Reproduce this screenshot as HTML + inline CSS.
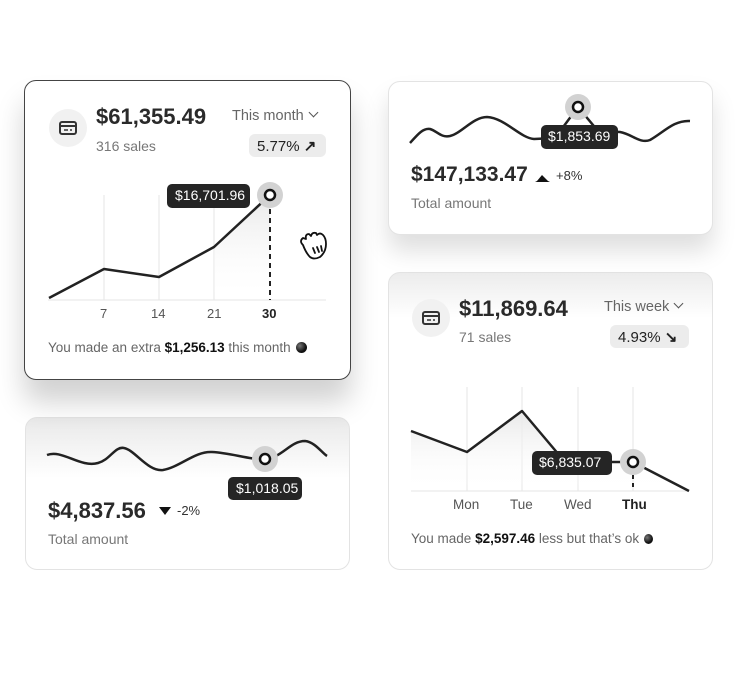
<!DOCTYPE html>
<html><head><meta charset="utf-8"><style>
*{margin:0;padding:0;box-sizing:border-box}
body{width:740px;height:680px;background:#fff;font-family:"Liberation Sans",sans-serif;color:#222;position:relative;overflow:hidden}
.card{position:absolute;background:#fff;border-radius:12px}
.light{border:1px solid #e3e3e3}
.t{position:absolute;white-space:nowrap}
svg{position:absolute;left:0;top:0}
.dot{display:inline-block;width:11px;height:11px;border-radius:50%;background:radial-gradient(circle at 35% 35%,#777,#111 60%);vertical-align:-1px;margin-left:5px}
.chev{display:inline-block;width:7px;height:7px;border-right:1.5px solid #555;border-bottom:1.5px solid #555;transform:rotate(45deg);margin-left:6px;vertical-align:4px}
</style></head><body>

<div class="card light" style="left:25px;top:417px;width:325px;height:153px;background:linear-gradient(#e9e9e9,#fff 60px)"></div>
<div class="card light" style="left:388px;top:272px;width:325px;height:298px;background:linear-gradient(#ececec,#fff 45px)"></div>

<div class="card" style="left:24px;top:80px;width:327px;height:300px;border:1.5px solid #444;box-shadow:0 22px 28px rgba(0,0,0,.18)"></div>
<div class="card light" style="left:388px;top:81px;width:325px;height:154px;box-shadow:0 16px 24px rgba(0,0,0,.13)"></div>

<svg width="740" height="680" viewBox="0 0 740 680">
<defs>
<linearGradient id="g" x1="0" y1="0" x2="0" y2="1"><stop offset="0" stop-color="#e8e8e8"/><stop offset="1" stop-color="#fff" stop-opacity="0"/></linearGradient>
</defs>
<circle cx="68" cy="128" r="19" fill="#f1f1f1"/>
<rect x="60" y="122" width="16" height="12" rx="2" fill="none" stroke="#333" stroke-width="2"/>
<line x1="60" y1="126" x2="76" y2="126" stroke="#333" stroke-width="2"/>
<line x1="64" y1="130" x2="68" y2="130" stroke="#333" stroke-width="1.5"/><line x1="70" y1="130" x2="72" y2="130" stroke="#333" stroke-width="1.5"/>
<rect x="249" y="134" width="77" height="23" rx="6" fill="#ececec"/>
<g stroke="#e6e6e6" stroke-width="1"><line x1="104" y1="195" x2="104" y2="300"/><line x1="159" y1="195" x2="159" y2="300"/><line x1="214" y1="195" x2="214" y2="300"/><line x1="48" y1="300" x2="326" y2="300"/></g>
<path d="M214 247 L270 195 L270 300 L214 300Z" fill="url(#g)"/>
<polyline points="49,298 104,269 159,277 214,247 270,195" fill="none" stroke="#222" stroke-width="2.5" stroke-linejoin="round"/>
<line x1="270" y1="200" x2="270" y2="300" stroke="#222" stroke-width="2" stroke-dasharray="5,4"/>
<circle cx="270" cy="195" r="13" fill="#d2d2d2"/><circle cx="270" cy="195" r="5" fill="#fff" stroke="#111" stroke-width="2.5"/>
<rect x="167" y="184" width="83" height="24" rx="5" fill="#252525"/>
<g fill="none" stroke="#111" stroke-width="1.8" stroke-linecap="round" stroke-linejoin="round">
<path d="M303 245 q-4 -4 0 -7 l3 1 q-1 -5 3 -5 l2 2 q1 -4 5 -3 l1 2 q3 -3 6 0 q3 3 3 9 q0 8 -6 13 q-6 3 -10 0 q-4 -4 -7 -12z"/>
<path d="M313 248 l2 5 M317 247 l2 5 M321 246 l1 5"/>
</g>

<path d="M47 455 C62 449,80 468,98 463 C110 460,115 446,124 448 C135 450,148 472,163 470 C180 467,195 451,212 452 C232 453,250 460,265 459 C282 458,290 441,305 441 C315 442,322 453,327 456" fill="none" stroke="#222" stroke-width="2.5"/>
<circle cx="265" cy="459" r="13" fill="#d2d2d2"/><circle cx="265" cy="459" r="5" fill="#fff" stroke="#111" stroke-width="2.5"/>
<rect x="228" y="477" width="74" height="23" rx="5" fill="#252525"/>
<path d="M159 507 L171 507 L165 515Z" fill="#111"/>

<path d="M410 143 C418 134,423 128,430 129 C437 131,441 138,450 136 C462 133,473 117,487 117 C505 118,520 138,534 139 L555 138 L578 107 L598 131 L620 132 C632 134,640 144,650 140 C664 132,674 120,690 121" fill="none" stroke="#222" stroke-width="2.5" stroke-linejoin="round"/>
<circle cx="578" cy="107" r="13" fill="#d2d2d2"/><circle cx="578" cy="107" r="5" fill="#fff" stroke="#111" stroke-width="2.5"/>
<rect x="541" y="125" width="77" height="24" rx="5" fill="#252525"/>
<path d="M537 181 L542 175 L548 181 L550 182 L535 182Z" fill="#111"/>

<circle cx="431" cy="318" r="19" fill="#f1f1f1"/>
<rect x="423" y="312" width="16" height="12" rx="2" fill="none" stroke="#333" stroke-width="2"/>
<line x1="423" y1="316" x2="439" y2="316" stroke="#333" stroke-width="2"/>
<line x1="427" y1="320" x2="431" y2="320" stroke="#333" stroke-width="1.5"/><line x1="433" y1="320" x2="435" y2="320" stroke="#333" stroke-width="1.5"/>
<rect x="610" y="325" width="79" height="23" rx="6" fill="#ececec"/>
<g stroke="#e6e6e6" stroke-width="1"><line x1="467" y1="387" x2="467" y2="491"/><line x1="522" y1="387" x2="522" y2="491"/><line x1="578" y1="387" x2="578" y2="491"/><line x1="633" y1="387" x2="633" y2="491"/><line x1="411" y1="491" x2="689" y2="491"/></g>
<path d="M411 431 L467 452 L522 411 L565 462 L633 462 L689 491 L411 491Z" fill="url(#g)"/>
<polyline points="411,431 467,452 522,411 565,462 633,462 689,491" fill="none" stroke="#222" stroke-width="2.5" stroke-linejoin="round"/>
<line x1="633" y1="467" x2="633" y2="491" stroke="#222" stroke-width="2" stroke-dasharray="4,4"/>
<circle cx="633" cy="462" r="13" fill="#d2d2d2"/><circle cx="633" cy="462" r="5" fill="#fff" stroke="#111" stroke-width="2.5"/>
<rect x="532" y="451" width="80" height="24" rx="5" fill="#252525"/>
</svg>

<div class="t" style="left:96px;top:104px;font-size:22px;font-weight:bold;color:#2a2a2a">$61,355.49</div>
<div class="t" style="left:96px;top:138px;font-size:14px;color:#777">316 sales</div>
<div class="t" style="left:232px;top:108px;font-size:14.5px;color:#666">This month<span class="chev"></span></div>
<div class="t" style="left:257px;top:137px;font-size:15px;color:#222">5.77% <b>&#8599;</b></div>
<div class="t" style="left:175px;top:187px;font-size:14px;color:#fff">$16,701.96</div>
<div class="t" style="left:100px;top:306px;font-size:13px;color:#555">7</div>
<div class="t" style="left:151px;top:306px;font-size:13px;color:#555">14</div>
<div class="t" style="left:207px;top:306px;font-size:13px;color:#555">21</div>
<div class="t" style="left:262px;top:306px;font-size:13px;color:#222;font-weight:bold">30</div>
<div class="t" style="left:48px;top:340px;font-size:13.5px;color:#666">You made an extra <b style="color:#111">$1,256.13</b> this month<span class="dot"></span></div>

<div class="t" style="left:236px;top:480px;font-size:14px;color:#fff">$1,018.05</div>
<div class="t" style="left:48px;top:498px;font-size:22px;font-weight:bold;color:#2a2a2a">$4,837.56</div>
<div class="t" style="left:177px;top:503px;font-size:13px;color:#333">-2%</div>
<div class="t" style="left:48px;top:531px;font-size:14px;color:#777">Total amount</div>

<div class="t" style="left:548px;top:128px;font-size:14px;color:#fff">$1,853.69</div>
<div class="t" style="left:411px;top:163px;font-size:21px;font-weight:bold;color:#2a2a2a">$147,133.47</div>
<div class="t" style="left:556px;top:168px;font-size:13px;color:#333">+8%</div>
<div class="t" style="left:411px;top:195px;font-size:14px;color:#777">Total amount</div>

<div class="t" style="left:459px;top:296px;font-size:22px;font-weight:bold;color:#2a2a2a">$11,869.64</div>
<div class="t" style="left:459px;top:329px;font-size:14px;color:#777">71 sales</div>
<div class="t" style="left:604px;top:299px;font-size:14.5px;color:#666">This week<span class="chev"></span></div>
<div class="t" style="left:618px;top:328px;font-size:15px;color:#222">4.93% <b>&#8600;</b></div>
<div class="t" style="left:539px;top:454px;font-size:14px;color:#fff">$6,835.07</div>
<div class="t" style="left:453px;top:497px;font-size:13.5px;color:#555">Mon</div>
<div class="t" style="left:510px;top:497px;font-size:13.5px;color:#555">Tue</div>
<div class="t" style="left:564px;top:497px;font-size:13.5px;color:#555">Wed</div>
<div class="t" style="left:622px;top:497px;font-size:13.5px;color:#222;font-weight:bold">Thu</div>
<div class="t" style="left:411px;top:531px;font-size:13.5px;color:#666">You made <b style="color:#111">$2,597.46</b> less but that’s ok<span class="dot" style="width:9px;height:10px"></span></div>
</body></html>
